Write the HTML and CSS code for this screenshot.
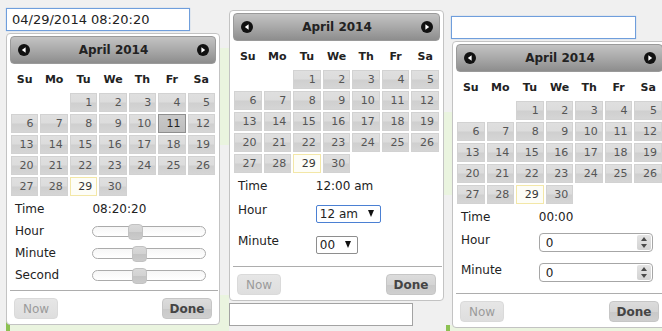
FILE: index.html
```html
<!DOCTYPE html>
<html lang="en">
<head>
<meta charset="utf-8">
<title>Timepicker examples</title>
<link rel="stylesheet" href="styles.css">
</head>
<body>
<div class="page">
  <div class="bg-col bg-a">
    <div class="code code-top"></div>
    <div class="code code-bottom"></div>
  </div>
  <div class="bg-col bg-b"></div>
  <div class="bg-col bg-c">
    <div class="code code-mid"></div>
    <div class="code code-end"></div>
  </div>
</div>

<div class="overlay">
  <!-- Example 1: sliders -->
  <section class="demo demo-1">
    <input class="field focus" type="text" value="04/29/2014 08:20:20">
    <div class="picker">
      <div class="head">
        <svg class="nav" width="12" height="12" viewBox="0 0 12 12"><circle cx="6" cy="6" r="6" fill="#111"/><path d="M7.6 3.3 L3.8 6 L7.6 8.7Z" fill="#fff"/></svg>
        <span class="title">April 2014</span>
        <svg class="nav" width="12" height="12" viewBox="0 0 12 12"><circle cx="6" cy="6" r="6" fill="#111"/><path d="M4.4 3.3 L8.2 6 L4.4 8.7Z" fill="#fff"/></svg>
      </div>
      <div class="cal">
        <span class="dow">Su</span><span class="dow">Mo</span><span class="dow">Tu</span><span class="dow">We</span><span class="dow">Th</span><span class="dow">Fr</span><span class="dow">Sa</span>
        <span></span><span></span><a class="day">1</a><a class="day">2</a><a class="day">3</a><a class="day">4</a><a class="day">5</a>
        <a class="day">6</a><a class="day">7</a><a class="day">8</a><a class="day">9</a><a class="day">10</a><a class="day active">11</a><a class="day">12</a>
        <a class="day">13</a><a class="day">14</a><a class="day">15</a><a class="day">16</a><a class="day">17</a><a class="day">18</a><a class="day">19</a>
        <a class="day">20</a><a class="day">21</a><a class="day">22</a><a class="day">23</a><a class="day">24</a><a class="day">25</a><a class="day">26</a>
        <a class="day">27</a><a class="day">28</a><a class="day today">29</a><a class="day">30</a>
      </div>
      <dl class="tp">
        <div class="row"><dt>Time</dt><dd>08:20:20</dd></div>
        <div class="row"><dt>Hour</dt><dd><div class="slider"><span class="handle" style="left:37%"></span></div></dd></div>
        <div class="row"><dt>Minute</dt><dd><div class="slider"><span class="handle" style="left:41%"></span></div></dd></div>
        <div class="row"><dt>Second</dt><dd><div class="slider"><span class="handle" style="left:41%"></span></div></dd></div>
      </dl>
      <div class="pane pane-1">
        <button class="btn now" disabled>Now</button>
        <button class="btn done">Done</button>
      </div>
    </div>
  </section>

  <!-- Example 2: selects -->
  <section class="demo demo-2">
    <div class="picker">
      <div class="head">
        <svg class="nav" width="12" height="12" viewBox="0 0 12 12"><circle cx="6" cy="6" r="6" fill="#111"/><path d="M7.6 3.3 L3.8 6 L7.6 8.7Z" fill="#fff"/></svg>
        <span class="title">April 2014</span>
        <svg class="nav" width="12" height="12" viewBox="0 0 12 12"><circle cx="6" cy="6" r="6" fill="#111"/><path d="M4.4 3.3 L8.2 6 L4.4 8.7Z" fill="#fff"/></svg>
      </div>
      <div class="cal">
        <span class="dow">Su</span><span class="dow">Mo</span><span class="dow">Tu</span><span class="dow">We</span><span class="dow">Th</span><span class="dow">Fr</span><span class="dow">Sa</span>
        <span></span><span></span><a class="day">1</a><a class="day">2</a><a class="day">3</a><a class="day">4</a><a class="day">5</a>
        <a class="day">6</a><a class="day">7</a><a class="day">8</a><a class="day">9</a><a class="day">10</a><a class="day">11</a><a class="day">12</a>
        <a class="day">13</a><a class="day">14</a><a class="day">15</a><a class="day">16</a><a class="day">17</a><a class="day">18</a><a class="day">19</a>
        <a class="day">20</a><a class="day">21</a><a class="day">22</a><a class="day">23</a><a class="day">24</a><a class="day">25</a><a class="day">26</a>
        <a class="day">27</a><a class="day">28</a><a class="day today">29</a><a class="day">30</a>
      </div>
      <dl class="tp">
        <div class="row"><dt>Time</dt><dd>12:00 am</dd></div>
        <div class="row row-sel"><dt>Hour</dt><dd><span class="sel focus"><select class="sel-hour"><option>12 am</option></select></span></dd></div>
        <div class="row row-sel"><dt>Minute</dt><dd><span class="sel"><select class="sel-min"><option>00</option></select></span></dd></div>
      </dl>
      <div class="pane pane-2">
        <button class="btn now" disabled>Now</button>
        <button class="btn done">Done</button>
      </div>
    </div>
    <input class="field field-under" type="text" value="">
  </section>

  <!-- Example 3: spinners -->
  <section class="demo demo-3">
    <input class="field focus field-3" type="text" value="">
    <div class="picker picker-3">
      <div class="head">
        <svg class="nav" width="12" height="12" viewBox="0 0 12 12"><circle cx="6" cy="6" r="6" fill="#111"/><path d="M7.6 3.3 L3.8 6 L7.6 8.7Z" fill="#fff"/></svg>
        <span class="title">April 2014</span>
        <svg class="nav" width="12" height="12" viewBox="0 0 12 12"><circle cx="6" cy="6" r="6" fill="#111"/><path d="M4.4 3.3 L8.2 6 L4.4 8.7Z" fill="#fff"/></svg>
      </div>
      <div class="cal">
        <span class="dow">Su</span><span class="dow">Mo</span><span class="dow">Tu</span><span class="dow">We</span><span class="dow">Th</span><span class="dow">Fr</span><span class="dow">Sa</span>
        <span></span><span></span><a class="day">1</a><a class="day">2</a><a class="day">3</a><a class="day">4</a><a class="day">5</a>
        <a class="day">6</a><a class="day">7</a><a class="day">8</a><a class="day">9</a><a class="day">10</a><a class="day">11</a><a class="day">12</a>
        <a class="day">13</a><a class="day">14</a><a class="day">15</a><a class="day">16</a><a class="day">17</a><a class="day">18</a><a class="day">19</a>
        <a class="day">20</a><a class="day">21</a><a class="day">22</a><a class="day">23</a><a class="day">24</a><a class="day">25</a><a class="day">26</a>
        <a class="day">27</a><a class="day">28</a><a class="day today">29</a><a class="day">30</a>
      </div>
      <dl class="tp">
        <div class="row"><dt>Time</dt><dd>00:00</dd></div>
        <div class="row row-spin"><dt>Hour</dt><dd><span class="spinner"><input type="text" value="0"><span class="spin-btns"><span class="up"></span><span class="down"></span></span></span></dd></div>
        <div class="row row-spin"><dt>Minute</dt><dd><span class="spinner"><input type="text" value="0"><span class="spin-btns"><span class="up"></span><span class="down"></span></span></span></dd></div>
      </dl>
      <div class="pane pane-3">
        <button class="btn now" disabled>Now</button>
        <button class="btn done">Done</button>
      </div>
    </div>
  </section>
</div>
</body>
</html>
```

FILE: styles.css
```css
* { box-sizing: border-box; }
html, body { margin: 0; padding: 0; }
body {
  width: 662px;
  height: 331px;
  overflow: hidden;
  position: relative;
  background: #f0f0f0;
  font-family: "DejaVu Sans", Verdana, sans-serif;
  color: #222;
}

/* ---------- underlying page ---------- */
.page {
  display: grid;
  grid-template-columns: 229px 215px 218px;
  height: 331px;
}
.bg-col { display: flex; flex-direction: column; }
.code {
  background: #eaf4df;
  border-left: 4px solid #8cc152;
}
.bg-a { padding-left: 6px; }
.code-top { margin-top: 48px; height: 97px; }
.code-bottom { margin-top: auto; height: 36px; }
.bg-c { padding-top: 112px; }
.code-mid { height: 83px; border-left: 1px solid #9a9a9a; margin-left: -2px; }
.code-end { margin-top: auto; height: 6px; margin-left: 2px; }

/* ---------- overlay with the pickers ---------- */
.overlay {
  position: absolute;
  inset: 0;
  display: flex;
  align-items: flex-start;
  padding-left: 6px;
}
.demo { flex-shrink: 0; display: flex; flex-direction: column; }
.demo-1 { width: 214px; padding-top: 8px; }
.demo-2 { width: 215px; margin-left: 9px; padding-top: 10px; }
.demo-3 { width: 216px; margin-left: 7px; padding-top: 16px; }

.field {
  display: block;
  height: 23px;
  margin: 0;
  border: 1px solid #a9a9a9;
  background: #fff;
  font: 13px "DejaVu Sans", Verdana, sans-serif;
  color: #222;
  padding: 0 5px;
  outline: none;
}
.demo-1 .field { width: 184px; }
.field.focus { border-color: #6f9edc; box-shadow: 0 0 1px #9dbde8; }
.field-3 { width: 185px; }
.field-under { width: 184px; height: 23px; margin-top: 2px; border-color: #a3a3a3; }

.picker {
  width: 214px;
  margin-top: 2px;
  background: #fff;
  border: 1px solid #c3c3c3;
  border-radius: 4px;
  padding: 2px 3px 0;
}
.demo-2 .picker { width: 215px; margin-top: 0; }
.picker-3 { width: 215px; margin-left: 1px; }

.head {
  height: 28px;
  display: flex;
  align-items: center;
  justify-content: space-between;
  padding: 0 6px 0 7px;
  border: 1px solid #9a9a9a;
  border-radius: 4px;
  background: linear-gradient(#c3c3c3 0%, #a9a9a9 50%, #8d8d8d 100%);
}
.nav { display: block; }
.title { font-weight: bold; font-size: 12px; color: #222; }

.cal {
  display: grid;
  grid-template-columns: repeat(7, 1fr);
  gap: 2px;
  padding: 0 1px;
}
.dow {
  height: 27px;
  padding-top: 4px;
  line-height: 23px;
  text-align: center;
  font-weight: bold;
  font-size: 11px;
  color: #222;
}
.day {
  display: block;
  height: 19px;
  line-height: 17px;
  border: 1px solid #d2d2d2;
  text-align: right;
  padding-right: 4px;
  font-size: 11px;
  color: #555;
  background: linear-gradient(#dfdfdf 0%, #dcdcdc 48%, #cfcfcf 52%, #d5d5d5 100%);
}
.day.active {
  border-color: #8f8f8f;
  background: linear-gradient(#c9c9c9, #bdbdbd);
  color: #222;
}
.day.today {
  border-color: #f3e7a7;
  background: #fdfdf7;
  color: #363636;
}

.tp { margin: 2px 0 0; padding: 0; }
.row {
  display: flex;
  align-items: center;
  height: 22px;
  font-size: 12px;
  color: #222;
}
.row dt { width: 40%; padding-left: 5px; line-height: 14px; }
.row dd { margin: 0; line-height: 14px; }

.slider {
  position: relative;
  width: 114px;
  height: 11px;
  border: 1px solid #ababab;
  border-radius: 6px;
  background: linear-gradient(#f6f6f6, #fff);
}
.handle {
  position: absolute;
  top: -3px;
  width: 15px;
  height: 16px;
  margin-left: -7px;
  border: 1px solid #c2c2c2;
  border-radius: 4px;
  background: linear-gradient(#d9d9d9 0%, #d2d2d2 50%, #c4c4c4 52%, #cbcbcb 100%);
}

.row-sel { height: 31px; align-items: flex-start; }
.row-sel dt { padding-top: 6px; }
.row-sel dd { padding-top: 8px; }
.sel { position: relative; display: inline-block; }
.sel select {
  display: block;
  appearance: none;
  -webkit-appearance: none;
  height: 18px;
  margin: 0;
  border: 1px solid #8e8e8e;
  border-radius: 2px;
  padding: 0 0 0 3px;
  font: 12px "DejaVu Sans", Verdana, sans-serif;
  color: #222;
  background: #fff;
  outline: none;
}
.sel.focus select { border-color: #4b80d3; }
.sel-hour { width: 65px; }
.sel-min { width: 42px; }
.sel::after {
  content: "";
  position: absolute;
  right: 7px;
  top: 5px;
  border-left: 3px solid transparent;
  border-right: 3px solid transparent;
  border-top: 7px solid #111;
  pointer-events: none;
}

.row-spin { height: 30px; align-items: flex-start; }
.row-spin dt { padding-top: 5px; }
.row-spin dd { padding-top: 5px; }
.spinner {
  display: flex;
  width: 114px;
  height: 19px;
  border: 1px solid #a6a6a6;
  border-radius: 4px;
  background: #fff;
  overflow: hidden;
}
.spinner input {
  flex: 1;
  min-width: 0;
  border: 0;
  margin: 0;
  padding: 0 0 0 6px;
  font: 12px "DejaVu Sans", Verdana, sans-serif;
  color: #222;
  background: transparent;
  outline: none;
}
.spin-btns {
  width: 14px;
  display: flex;
  flex-direction: column;
  margin: 1px 1px 1px 0;
  border-radius: 2px;
  background: linear-gradient(#e4e4e4, #d2d2d2);
}
.spin-btns span { flex: 1; display: flex; align-items: center; justify-content: center; }
.spin-btns .up::before {
  content: "";
  border-left: 3.5px solid transparent;
  border-right: 3.5px solid transparent;
  border-bottom: 4px solid #4a4a4a;
}
.spin-btns .down::before {
  content: "";
  border-left: 3.5px solid transparent;
  border-right: 3.5px solid transparent;
  border-top: 4px solid #4a4a4a;
}

.pane {
  display: flex;
  justify-content: space-between;
  border-top: 1px solid #adadad;
  margin: 4px -2px 0 0;
  padding: 7px 6px 5px 4px;
}
.pane-2 { margin-top: 7px; }
.pane-3 { margin-top: 5px; }
.btn {
  height: 21px;
  margin: 0;
  padding: 0;
  border-radius: 4px;
  font: 12px "DejaVu Sans", Verdana, sans-serif;
}
.now {
  width: 44px;
  color: #9b9b9b;
  background: linear-gradient(#e6e6e6, #dedede);
  border: 1px solid #dadada;
}
.done {
  width: 50px;
  font-weight: bold;
  color: #454545;
  background: linear-gradient(#dcdcdc 0%, #d4d4d4 50%, #c9c9c9 52%, #cfcfcf 100%);
  border: 1px solid #c6c6c6;
}
```
